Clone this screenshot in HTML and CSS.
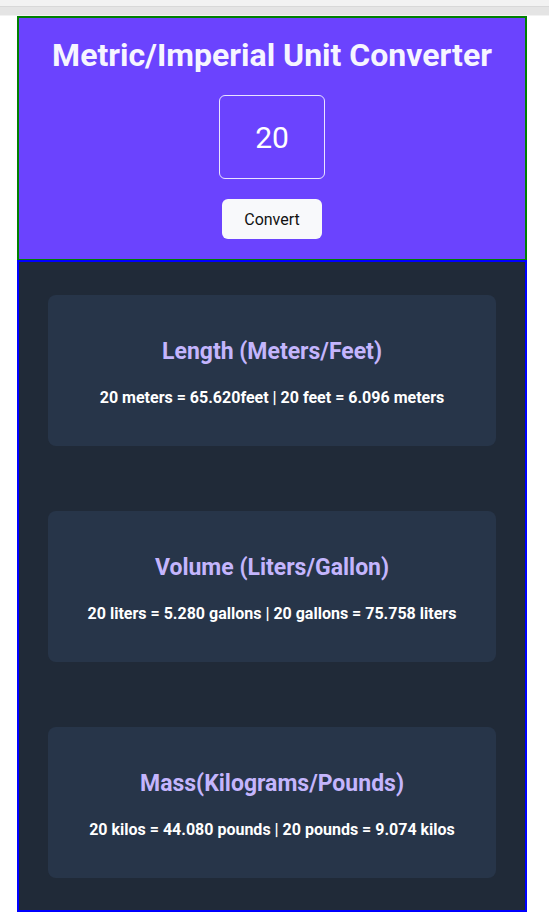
FILE: index.html
```html
<!DOCTYPE html>
<html>
<head>
<meta charset="utf-8">
<link rel="stylesheet" href="styles.css">
</head>
<body>
<div class="topbar"><div class="topbar-line"></div></div>
<main class="app">
  <section class="hero">
    <h1 class="title">Metric/Imperial Unit Converter</h1>
    <input class="num-input" type="text" value="20">
    <button class="convert-btn">Convert</button>
  </section>
  <section class="results">
    <div class="card">
      <h2 class="card-title">Length (Meters/Feet)</h2>
      <p class="card-text">20 meters = 65.620feet | 20 feet = 6.096 meters</p>
    </div>
    <div class="card">
      <h2 class="card-title">Volume (Liters/Gallon)</h2>
      <p class="card-text">20 liters = 5.280 gallons | 20 gallons = 75.758 liters</p>
    </div>
    <div class="card">
      <h2 class="card-title">Mass(Kilograms/Pounds)</h2>
      <p class="card-text">20 kilos = 44.080 pounds | 20 pounds = 9.074 kilos</p>
    </div>
  </section>
</main>
</body>
</html>
```
FILE: styles.css
```css
* { box-sizing: border-box; }
html, body { margin: 0; padding: 0; background: #ffffff; }
body { font-family: Roboto, "Liberation Sans", sans-serif; }

.topbar {
  height: 16px;
  background: #f2f2f2;
  padding-top: 6px;
}
.topbar-line {
  height: 9px;
  background: #e4e4e4;
  border-top: 1px solid #d8d8d8;
}

.app {
  width: 510px;
  margin-left: 17px;
}

.hero {
  background: #6b43fe;
  border: 2px solid green;
  border-bottom-width: 1px;
  height: 244px;
  display: flex;
  flex-direction: column;
  align-items: center;
  padding-top: 17px;
}
.title {
  margin: 0;
  color: #f6f5ff;
  font-size: 32px;
  font-weight: 700;
  line-height: 40px;
}
.num-input {
  margin-top: 20px;
  width: 106px;
  height: 84px;
  background: transparent;
  border: 1px solid #e9e4ff;
  border-radius: 6px;
  color: #ffffff;
  font-family: Roboto, "Liberation Sans", sans-serif;
  font-size: 30px;
  text-align: center;
  outline: none;
}
.convert-btn {
  margin-top: 20px;
  width: 100px;
  height: 40px;
  background: #f8f9fb;
  border: none;
  border-radius: 6px;
  color: #111;
  font-family: Roboto, "Liberation Sans", sans-serif;
  font-size: 16px;
}

.results {
  background: #202a38;
  border: 2px solid blue;
  padding: 33px 29px 32px;
  display: flex;
  flex-direction: column;
  gap: 65.4px;
}
.card {
  background: #273549;
  border-radius: 8px;
  height: 150.6px;
  display: flex;
  flex-direction: column;
  align-items: center;
  padding-top: 43px;
}
.card-title {
  margin: 0;
  color: #c4b5fd;
  font-size: 23px;
  font-weight: 700;
  line-height: 28px;
}
.card-text {
  margin: 22px 0 0;
  color: #ffffff;
  font-size: 16px;
  font-weight: 700;
  line-height: 19px;
}
```
